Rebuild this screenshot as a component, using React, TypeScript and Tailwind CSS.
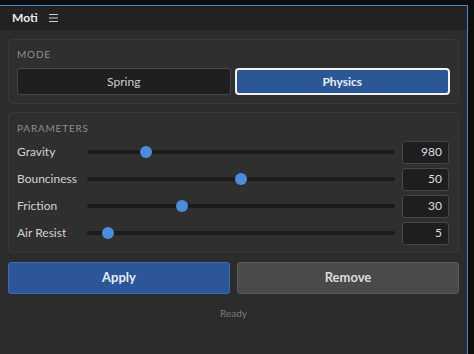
import React from "react";

const font = { fontFamily: 'Lato, "Noto Sans", sans-serif' };

const params = [
  { label: "Gravity", value: "980", pos: 18 },
  { label: "Bounciness", value: "50", pos: 50 },
  { label: "Friction", value: "30", pos: 30 },
  { label: "Air Resist", value: "5", pos: 5 },
];

function Slider({ pos }: { pos: number }) {
  return (
    <div className="relative h-[12px] w-[308px] flex items-center">
      <div className="h-[4px] w-full rounded-full bg-[#1c1c1c]" />
      <div
        className="absolute top-0 size-[12px] rounded-full bg-[#4a8ddf]"
        style={{ left: (pos / 100) * 296 + "px" }}
      />
    </div>
  );
}

function Row({ label, value, pos }: { label: string; value: string; pos: number }) {
  return (
    <div className="flex items-center h-[22px]">
      <div className="w-[70px] text-[12px] text-[#d2d2d2]">{label}</div>
      <Slider pos={pos} />
      <div className="ml-[7px] w-[47px] h-[23px] rounded-[3px] border border-[#474747] bg-[#1e1e1e] flex items-center justify-end pr-[6px] text-[12px] text-[#dedede]">
        {value}
      </div>
    </div>
  );
}

function SectionTitle({ children }: { children: React.ReactNode }) {
  return (
    <div className="text-[10px] tracking-[0.08em] text-[#8e8e8e] uppercase leading-[14px]">
      {children}
    </div>
  );
}

export default function App() {
  return (
    <div className="w-[474px] h-[354px] bg-[#0e0e0e] pt-[5px] overflow-hidden" style={font}>
      <div className="w-[468px] h-[349px] border-t border-r border-[#4a86cf] bg-[#2c2c2c] flex flex-col">
        <div className="h-[24px] bg-[#222222] flex items-center pl-[12px] gap-[11px]">
          <span className="text-[12px] font-bold text-[#ececec]">Moti</span>
          <svg width="9" height="8" viewBox="0 0 9 8">
            <path d="M0 0.5H9M0 4H9M0 7.5H9" stroke="#cfcfcf" strokeWidth="1" />
          </svg>
        </div>
        <div className="flex flex-col px-[8px] pt-[9px]">
          <div className="rounded-[4px] border border-[#393939] bg-[#2f2f2f] px-[8px] pt-[7px] pb-[8px]">
            <SectionTitle>Mode</SectionTitle>
            <div className="mt-[7px] flex gap-[4px]">
              <div className="flex-1 h-[27px] rounded-[3px] border border-[#474747] bg-[#1f1f1f] flex items-center justify-center text-[12px] text-[#cfcfcf]">
                Spring
              </div>
              <div className="flex-1 h-[27px] rounded-[4px] border-2 border-[#f2f2f2] bg-[#2c5796] flex items-center justify-center text-[12px] font-bold text-[#e8eef8]">
                Physics
              </div>
            </div>
          </div>
          <div className="mt-[8px] rounded-[4px] border border-[#393939] bg-[#2f2f2f] px-[8px] pt-[8px] pb-[8px]">
            <SectionTitle>Parameters</SectionTitle>
            <div className="mt-[6px] flex flex-col gap-[5px]">
              {params.map((p) => (
                <Row key={p.label} {...p} />
              ))}
            </div>
          </div>
          <div className="mt-[9px] flex gap-[7px]">
            <div className="flex-1 h-[32px] rounded-[3px] border border-[#3d6cb0] bg-[#2c5697] flex items-center justify-center text-[13px] font-bold text-[#e6ecf6]">
              Apply
            </div>
            <div className="flex-1 h-[32px] rounded-[3px] border border-[#5a5a5a] bg-[#4a4a4a] flex items-center justify-center text-[13px] font-bold text-[#dcdcdc]">
              Remove
            </div>
          </div>
          <div className="mt-[12px] text-center text-[10px] text-[#7a7a7a]">Ready</div>
        </div>
      </div>
    </div>
  );
}
